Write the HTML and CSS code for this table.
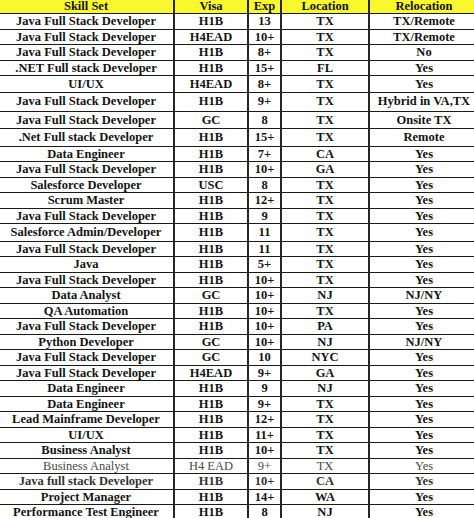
FILE: index.html
```html
<!DOCTYPE html>
<html>
<head>
<meta charset="utf-8">
<link rel="stylesheet" href="styles.css">
</head>
<body>
<table class="grid">
  <colgroup>
    <col class="c-skill"><col class="c-visa"><col class="c-exp"><col class="c-loc"><col class="c-rel">
  </colgroup>
  <thead>
    <tr class="head"><th>Skill Set</th><th>Visa</th><th>Exp</th><th>Location</th><th>Relocation</th></tr>
  </thead>
  <tbody>
    <tr><td>Java Full Stack Developer</td><td>H1B</td><td>13</td><td>TX</td><td>TX/Remote</td></tr>
    <tr><td>Java Full Stack Developer</td><td>H4EAD</td><td>10+</td><td>TX</td><td>TX/Remote</td></tr>
    <tr><td>Java Full Stack Developer</td><td>H1B</td><td>8+</td><td>TX</td><td>No</td></tr>
    <tr><td>.NET Full stack Developer</td><td>H1B</td><td>15+</td><td>FL</td><td>Yes</td></tr>
    <tr class="r16"><td>UI/UX</td><td>H4EAD</td><td>8+</td><td>TX</td><td>Yes</td></tr>
    <tr class="r19"><td>Java Full Stack Developer</td><td>H1B</td><td>9+</td><td>TX</td><td>Hybrid in VA,TX</td></tr>
    <tr class="r17"><td>Java Full Stack Developer</td><td>GC</td><td>8</td><td>TX</td><td>Onsite TX</td></tr>
    <tr class="r17"><td>.Net Full stack Developer</td><td>H1B</td><td>15+</td><td>TX</td><td>Remote</td></tr>
    <tr><td>Data Engineer</td><td>H1B</td><td>7+</td><td>CA</td><td>Yes</td></tr>
    <tr><td>Java Full Stack Developer</td><td>H1B</td><td>10+</td><td>GA</td><td>Yes</td></tr>
    <tr><td>Salesforce Developer</td><td>USC</td><td>8</td><td>TX</td><td>Yes</td></tr>
    <tr><td>Scrum Master</td><td>H1B</td><td>12+</td><td>TX</td><td>Yes</td></tr>
    <tr><td>Java Full Stack Developer</td><td>H1B</td><td>9</td><td>TX</td><td>Yes</td></tr>
    <tr class="r17"><td>Salesforce Admin/Developer</td><td>H1B</td><td>11</td><td>TX</td><td>Yes</td></tr>
    <tr><td>Java Full Stack Developer</td><td>H1B</td><td>11</td><td>TX</td><td>Yes</td></tr>
    <tr><td>Java</td><td>H1B</td><td>5+</td><td>TX</td><td>Yes</td></tr>
    <tr><td>Java Full Stack Developer</td><td>H1B</td><td>10+</td><td>TX</td><td>Yes</td></tr>
    <tr><td>Data Analyst</td><td>GC</td><td>10+</td><td>NJ</td><td>NJ/NY</td></tr>
    <tr><td>QA Automation</td><td>H1B</td><td>10+</td><td>TX</td><td>Yes</td></tr>
    <tr><td>Java Full Stack Developer</td><td>H1B</td><td>10+</td><td>PA</td><td>Yes</td></tr>
    <tr><td>Python Developer</td><td>GC</td><td>10+</td><td>NJ</td><td>NJ/NY</td></tr>
    <tr><td>Java Full Stack Developer</td><td>GC</td><td>10</td><td>NYC</td><td>Yes</td></tr>
    <tr><td>Java Full Stack Developer</td><td>H4EAD</td><td>9+</td><td>GA</td><td>Yes</td></tr>
    <tr><td>Data Engineer</td><td>H1B</td><td>9</td><td>NJ</td><td>Yes</td></tr>
    <tr><td>Data Engineer</td><td>H1B</td><td>9+</td><td>TX</td><td>Yes</td></tr>
    <tr><td>Lead Mainframe Developer</td><td>H1B</td><td>12+</td><td>TX</td><td>Yes</td></tr>
    <tr><td>UI/UX</td><td>H1B</td><td>11+</td><td>TX</td><td>Yes</td></tr>
    <tr><td>Business Analyst</td><td>H1B</td><td>10+</td><td>TX</td><td>Yes</td></tr>
    <tr class="light"><td>Business Analyst</td><td>H4 EAD</td><td>9+</td><td>TX</td><td>Yes</td></tr>
    <tr class="soft"><td>Java full stack Developer</td><td>H1B</td><td>10+</td><td>CA</td><td>Yes</td></tr>
    <tr><td>Project Manager</td><td>H1B</td><td>14+</td><td>WA</td><td>Yes</td></tr>
    <tr><td>Performance Test Engineer</td><td>H1B</td><td>8</td><td>NJ</td><td>Yes</td></tr>
  </tbody>
</table>
</body>
</html>
```
FILE: styles.css
```css
html, body {
  margin: 0;
  padding: 0;
  background: #ffffff;
  overflow: hidden;
}

.grid {
  margin-left: -3px;
  border-collapse: collapse;
  table-layout: fixed;
  width: 481px;
  font-family: "Liberation Serif", "Times New Roman", serif;
  font-weight: bold;
  font-size: 12.5px;
  line-height: 1;
  color: #141414;
}

.c-skill { width: 176px; }
.c-visa { width: 74px; }
.c-exp { width: 33px; }
.c-loc { width: 88px; }
.c-rel { width: 110px; }

.grid th,
.grid td {
  padding: 0;
  text-align: center;
  vertical-align: middle;
  border-top: 1px solid #1a1a1a;
  border-bottom: 1px solid #1a1a1a;
  border-left: 2px solid #262626;
  border-right: 2px solid #262626;
  white-space: nowrap;
  overflow: hidden;
}

.grid tr { height: 15.5px; }
.grid tr.head { height: 13.5px; }
.grid tr.r16 { height: 16.5px; }
.grid tr.r17 { height: 17.5px; }
.grid tr.r19 { height: 19px; }

.head th {
  background: #f8f82c;
  font-weight: bold;
  border-top: none;
}

.light td {
  color: #4a4a4a;
  font-weight: normal;
}

.soft td {
  color: #333333;
}
```
